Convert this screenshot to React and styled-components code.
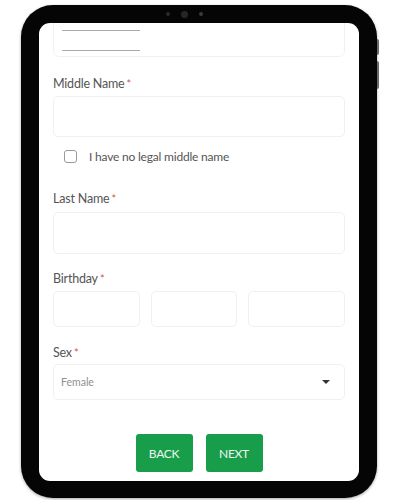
import styled, { createGlobalStyle } from "styled-components"

const GlobalStyle = createGlobalStyle`
  html, body {
    margin: 0;
    padding: 0;
    background: #fff;
    font-family: Lato, "Open Sans", sans-serif;
  }
`

const Page = styled.div`
  width: 400px;
  height: 500px;
  padding: 5px 0 0 21px;
  box-sizing: border-box;
  background: #fff;
`

const Tablet = styled.div`
  position: relative;
  width: 356px;
  height: 493px;
  box-sizing: border-box;
  padding: 0 18px 17px;
  background: #050505;
  border-radius: 32px;
  box-shadow: 0 1px 3px rgba(0, 0, 0, 0.35);
  display: flex;
  flex-direction: column;
`

const SideButton = styled.div`
  position: absolute;
  right: -2px;
  top: ${({ top }) => top}px;
  width: 2px;
  height: ${({ size }) => size}px;
  background: #6a6a6a;
  border-radius: 0 2px 2px 0;
`

const Bezel = styled.div`
  height: 18px;
  display: flex;
  align-items: center;
  justify-content: center;
  gap: 11px;
  padding-right: 30px;
`

const Dot = styled.span`
  width: ${({ size }) => size}px;
  height: ${({ size }) => size}px;
  border-radius: 50%;
  background: ${({ colour }) => colour};
`

const Screen = styled.div`
  flex: 1;
  background: #fff;
  border-radius: 11px;
  overflow: hidden;
  padding: 0 14px;
  display: flex;
  flex-direction: column;
`

const TopCard = styled.div`
  margin-top: -10px;
  height: 44px;
  box-sizing: border-box;
  border: 1px solid #f1f1f1;
  border-radius: 6px;
  padding: 16px 0 0 8px;
  display: flex;
  flex-direction: column;
  gap: 19px;
`

const Rule = styled.div`
  width: 78px;
  height: 1px;
  background: #a9a9a9;
`

const Label = styled.div`
  margin-top: ${({ top }) => top}px;
  margin-bottom: ${({ bottom }) => bottom}px;
  height: 16px;
  line-height: 16px;
  font-size: 12.5px;
  color: #555;
  letter-spacing: -0.2px;
`

const Star = styled.span`
  color: #d9534f;
  font-size: 11px;
  margin-left: 2px;
  vertical-align: top;
`

const Input = styled.div`
  height: ${({ h }) => h}px;
  box-sizing: border-box;
  border: 1px solid #f0f0f0;
  border-radius: 5px;
  background: #fff;
`

const CheckRow = styled.label`
  margin-top: 9px;
  height: 20px;
  padding-left: 11px;
  display: flex;
  align-items: center;
  gap: 12px;
  font-size: 12px;
  color: #555;
  letter-spacing: -0.2px;
`

const Box = styled.span`
  width: 13px;
  height: 13px;
  box-sizing: border-box;
  border: 1.5px solid #9a9a9a;
  border-radius: 3px;
`

const DateRow = styled.div`
  display: grid;
  grid-template-columns: 87px 86px 1fr;
  gap: 11px;
`

const Select = styled.div`
  height: 36px;
  box-sizing: border-box;
  border: 1px solid #f0f0f0;
  border-radius: 5px;
  padding: 0 14px 0 7px;
  display: flex;
  align-items: center;
  justify-content: space-between;
  font-size: 10.5px;
  color: #8f8f8f;
`

const Caret = styled.span`
  width: 0;
  height: 0;
  border-left: 4px solid transparent;
  border-right: 4px solid transparent;
  border-top: 4px solid #333;
`

const Actions = styled.div`
  margin-top: 34px;
  display: flex;
  justify-content: center;
  gap: 13px;
`

const Button = styled.button`
  width: 57px;
  height: 38px;
  border: 0;
  border-radius: 3px;
  background: #189e4b;
  color: #eef7f0;
  font-family: Lato, "Open Sans", sans-serif;
  font-size: 12px;
  letter-spacing: -0.3px;
  padding: 0;
`

const Required = ({ children, top, bottom }) => (
  <Label top={top} bottom={bottom}>
    {children}
    <Star>*</Star>
  </Label>
)

export default function App() {
  return (
    <>
      <GlobalStyle />
      <Page>
        <Tablet>
          <SideButton top={34} size={16} />
          <SideButton top={56} size={28} />
          <Bezel>
            <Dot size={4} colour="#2a2a2a" />
            <Dot size={7} colour="#262626" />
            <Dot size={4} colour="#3a3a3a" />
          </Bezel>
          <Screen>
            <TopCard>
              <Rule />
              <Rule />
            </TopCard>

            <Required top={19} bottom={4}>Middle Name</Required>
            <Input h={41} />
            <CheckRow>
              <Box />
              I have no legal middle name
            </CheckRow>

            <Required top={25} bottom={5}>Last Name</Required>
            <Input h={42} />

            <Required top={17} bottom={4}>Birthday</Required>
            <DateRow>
              <Input h={36} />
              <Input h={36} />
              <Input h={36} />
            </DateRow>

            <Required top={18} bottom={3}>Sex</Required>
            <Select>
              Female
              <Caret />
            </Select>

            <Actions>
              <Button>BACK</Button>
              <Button>NEXT</Button>
            </Actions>
          </Screen>
        </Tablet>
      </Page>
    </>
  )
}
